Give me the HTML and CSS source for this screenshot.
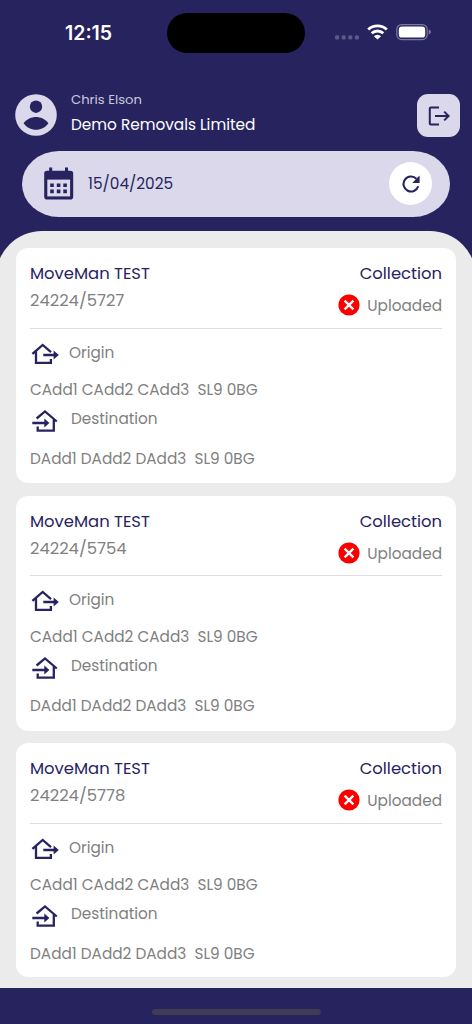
FILE: index.html
```
<!DOCTYPE html>
<html lang="en">
<head>
    <meta charset="UTF-8">
    <title>Jobs</title>
    <link rel="stylesheet" href="styles.css">
</head>
<body>
<!-- shared icons -->
<svg class="defs" width="0" height="0">
    <symbol id="origin" viewBox="0 0 28 22">
        <path d="M1.4 10.9L11.7 1.9L20 9.1M5 8.5V19.9H19.9V16M12.3 12H24" fill="none" stroke="#27235f" stroke-width="2.3"/>
        <path d="M22.6 7.6L27.8 12L22.6 16.4Z" fill="#27235f"/>
    </symbol>
    <symbol id="destination" viewBox="0 0 28 24">
        <path d="M5.6 9.5L14 2.4L25.8 12.5M6.7 17.5V21.6H22.8V10M1.3 14H15" fill="none" stroke="#27235f" stroke-width="2.3"/>
        <path d="M13.3 9.4L18.4 14L13.3 18.6Z" fill="#27235f"/>
    </symbol>
    <symbol id="failed" viewBox="0 0 22 22">
        <circle cx="11" cy="11" r="10.6" fill="#fc0000"/>
        <path d="M6.6 6.6L15.4 15.4M15.4 6.6L6.6 15.4" stroke="#fff" stroke-width="2.3"/>
    </symbol>
</svg>

<div class="app">
    <div class="status">
        <span class="time">12:15</span>
        <div class="island"></div>
        <div class="signals">
            <svg width="98" height="20" viewBox="0 0 98 20">
                <g fill="#5d5987">
                    <rect x="1" y="11.3" width="4.2" height="4.2" rx="1.5"/>
                    <rect x="7.6" y="11.3" width="4.2" height="4.2" rx="1.5"/>
                    <rect x="14.2" y="11.3" width="4.2" height="4.2" rx="1.5"/>
                    <rect x="20.8" y="11.3" width="4.2" height="4.2" rx="1.5"/>
                </g>
                <path d="M34.2 5.6A13.6 13.6 0 0 1 52.8 5.6M37.7 9.3A8.4 8.4 0 0 1 49.3 9.3" fill="none" stroke="#fff" stroke-width="2.8"/>
                <path d="M39.9 12.2A5 5 0 0 1 47.1 12.2L43.5 15.6Z" fill="#fff"/>
                <rect x="62.8" y="0.6" width="30.4" height="15" rx="4.8" fill="none" stroke="#7c799f" stroke-width="1.2"/>
                <rect x="64.8" y="2.5" width="26.4" height="11.1" rx="3.2" fill="#fff"/>
                <path d="M94.7 5.6Q97 6.3 97 8.1Q97 9.9 94.7 10.6Z" fill="#7c799f"/>
            </svg>
        </div>
    </div>

    <div class="header">
        <svg width="42" height="42" viewBox="0 0 42 42">
            <circle cx="21" cy="21" r="20.8" fill="#dad8ea"/>
            <circle cx="21" cy="12.7" r="6.2" fill="#27235f"/>
            <path d="M8.6 29.2C11.5 25 16.8 23 21 23S30.5 25 33.4 29.2C30.5 33.5 26 35.7 21 35.7S11.5 33.5 8.6 29.2Z" fill="#27235f"/>
        </svg>
        <div class="user">
            <div class="name">Chris Elson</div>
            <div class="company">Demo Removals Limited</div>
        </div>
        <div class="logout">
            <svg width="22" height="20" viewBox="0 0 22 20">
                <path d="M11 1.4H2.8Q1.8 1.4 1.8 2.4V17.6Q1.8 18.6 2.8 18.6H11M7 10H20.2M16.2 5.6L20.6 10L16.2 14.4" fill="none" stroke="#27235f" stroke-width="2"/>
            </svg>
        </div>
    </div>

    <div class="datebar">
        <svg width="30" height="33" viewBox="0 0 30 33">
            <path d="M3 3.7H5.2V0.5H8.2V3.7H21V0.5H24V3.7H26.4Q29.2 3.7 29.2 6.5V29.7Q29.2 32.5 26.4 32.5H3Q0.2 32.5 0.2 29.7V6.5Q0.2 3.7 3 3.7Z" fill="#27235f"/>
            <rect x="3.3" y="12.6" width="22.8" height="16.8" fill="#dad8ea"/>
            <path d="M6.2 16.4h3.6v3.6h-3.6zM12.8 16.4h3.6v3.6h-3.6zM19.3 16.4h3.6v3.6h-3.6zM6.2 22.6h3.6v3.6h-3.6zM12.8 22.6h3.6v3.6h-3.6zM19.3 22.6h3.6v3.6h-3.6z" fill="#27235f"/>
        </svg>
        <span class="date">15/04/2025</span>
        <div class="refresh">
            <svg width="18" height="18" viewBox="0 0 18 18">
                <path d="M16.2 11.2A7.5 7.5 0 1 1 14.4 3.8" fill="none" stroke="#27235f" stroke-width="2.1"/>
                <path d="M17.6 0.6V8H10.2Z" fill="#27235f"/>
            </svg>
        </div>
    </div>

    <div class="panel">
        <div class="card">
            <div class="head">
                <div>
                    <div class="title">MoveMan TEST</div>
                    <div class="number">24224/5727</div>
                </div>
                <div class="right">
                    <div class="title type">Collection</div>
                    <div class="upload"><svg width="22" height="22"><use href="#failed"/></svg><span>Uploaded</span></div>
                </div>
            </div>
            <div class="place"><svg width="28" height="22"><use href="#origin"/></svg><span class="orig">Origin</span></div>
            <div class="address">CAdd1 CAdd2 CAdd3&nbsp; SL9 0BG</div>
            <div class="place dest"><svg width="28" height="24"><use href="#destination"/></svg><span>Destination</span></div>
            <div class="address last">DAdd1 DAdd2 DAdd3&nbsp; SL9 0BG</div>
        </div>

        <div class="card">
            <div class="head">
                <div>
                    <div class="title">MoveMan TEST</div>
                    <div class="number">24224/5754</div>
                </div>
                <div class="right">
                    <div class="title type">Collection</div>
                    <div class="upload"><svg width="22" height="22"><use href="#failed"/></svg><span>Uploaded</span></div>
                </div>
            </div>
            <div class="place"><svg width="28" height="22"><use href="#origin"/></svg><span class="orig">Origin</span></div>
            <div class="address">CAdd1 CAdd2 CAdd3&nbsp; SL9 0BG</div>
            <div class="place dest"><svg width="28" height="24"><use href="#destination"/></svg><span>Destination</span></div>
            <div class="address last">DAdd1 DAdd2 DAdd3&nbsp; SL9 0BG</div>
        </div>

        <div class="card">
            <div class="head">
                <div>
                    <div class="title">MoveMan TEST</div>
                    <div class="number">24224/5778</div>
                </div>
                <div class="right">
                    <div class="title type">Collection</div>
                    <div class="upload"><svg width="22" height="22"><use href="#failed"/></svg><span>Uploaded</span></div>
                </div>
            </div>
            <div class="place"><svg width="28" height="22"><use href="#origin"/></svg><span class="orig">Origin</span></div>
            <div class="address">CAdd1 CAdd2 CAdd3&nbsp; SL9 0BG</div>
            <div class="place dest"><svg width="28" height="24"><use href="#destination"/></svg><span>Destination</span></div>
            <div class="address last">DAdd1 DAdd2 DAdd3&nbsp; SL9 0BG</div>
        </div>
    </div>

    <div class="bottom">
        <div class="indicator"></div>
    </div>
</div>
</body>
</html>
```
FILE: styles.css
```
* {
    box-sizing: border-box;
}

body {
    margin: 0;
    background: #27235f;
    font-family: Poppins, Inter, sans-serif;
    font-size: 15.3px;
}

svg {
    display: block;
    flex: none;
}

.defs {
    position: absolute;
}

.app {
    width: 472px;
    height: 1024px;
    display: flex;
    flex-direction: column;
    overflow: hidden;
}

.status {
    display: flex;
    height: 94px;
    padding-top: 13px;
}

.time {
    width: 167px;
    padding-left: 65px;
    color: #fff;
    font-family: Inter, sans-serif;
    font-size: 19.5px;
    font-weight: 600;
    line-height: 40px;
}

.island {
    width: 138px;
    height: 40px;
    border-radius: 20px;
    background: #000;
}

.signals {
    padding: 11px 0 0 29px;
}

.header {
    display: flex;
    height: 57px;
    padding-left: 15px;
}

.user {
    flex: 1;
    margin-left: 14px;
}

.name {
    margin-top: -4px;
    line-height: 20px;
    color: #c9c7dc;
    font-size: 13.2px;
}

.company {
    margin-top: 4px;
    line-height: 22px;
    color: #fff;
}

.logout {
    width: 43px;
    height: 43px;
    margin-right: 12px;
    display: flex;
    align-items: center;
    justify-content: center;
    border-radius: 11px;
    background: #dad8ea;
}

.datebar {
    display: flex;
    align-items: center;
    height: 65.5px;
    margin: 0 22px;
    padding: 0 18px 0 22px;
    border-radius: 37px / 33px;
    background: #dad8ea;
}

.date {
    flex: 1;
    margin-left: 14px;
    color: #27235f;
}

.refresh {
    width: 43px;
    height: 43px;
    display: flex;
    align-items: center;
    justify-content: center;
    border-radius: 50%;
    background: #fff;
}

.panel {
    display: flex;
    flex-direction: column;
    gap: 12.5px;
    height: 757.5px;
    margin: 14px -4px 0;
    padding: 17.5px 20px 0;
    border-radius: 46px 46px 0 0;
    background: #ebebeb;
}

.card {
    height: 235px;
    padding: 15px 14px 0;
    border-radius: 12px;
    background: #fff;
    color: #808080;
}

.card:last-child {
    height: 234px;
}

.head {
    display: flex;
    justify-content: space-between;
    height: 65.5px;
    border-bottom: 1.5px solid #dedede;
}

.title {
    line-height: 22px;
    color: #27235f;
    font-size: 16.4px;
}

.number {
    margin-top: 5px;
    line-height: 22px;
    font-size: 16.4px;
}

.right {
    display: flex;
    flex-direction: column;
    align-items: flex-end;
}

.upload {
    display: flex;
    gap: 7px;
    margin-top: 9px;
    line-height: 24px;
}

.place {
    display: flex;
    height: 22px;
    margin: 14px 0 0 1px;
    gap: 12px;
    line-height: 20px;
}

.orig {
    margin-left: -2px;
}

.address {
    margin-top: 15px;
    line-height: 20px;
    white-space: nowrap;
}

.dest {
    height: 24px;
    margin-top: 9px;
}

.last {
    margin-top: 16px;
}

.bottom {
    height: 36px;
    padding-top: 21px;
}

.indicator {
    width: 169px;
    height: 6px;
    margin: 0 auto;
    border-radius: 3px;
    background: #403c55;
}
```
